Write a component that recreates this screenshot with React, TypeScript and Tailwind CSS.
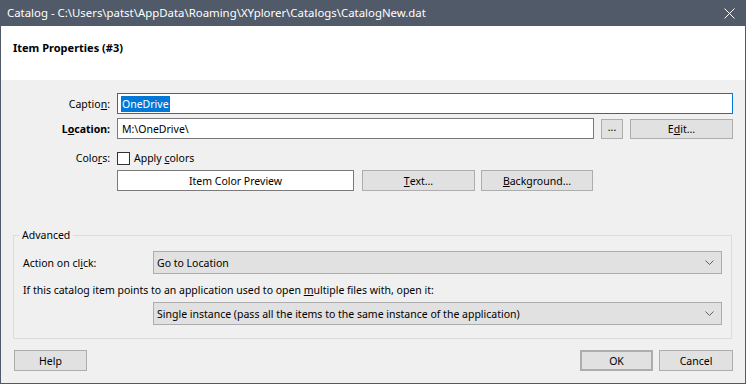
import React from 'react'

const font = "font-['Noto_Sans',sans-serif] text-[10.5px] leading-[16px]"

function Btn({ children, className = '' }: { children: React.ReactNode; className?: string }) {
  return (
    <div
      className={`flex items-center justify-center bg-[#e1e1e1] border border-[#adadad] text-black ${className}`}
    >
      {children}
    </div>
  )
}

function Select({ value }: { value: string }) {
  return (
    <div className="flex-1 h-[23px] flex items-center justify-between bg-[#e1e1e1] border border-[#adadad] pl-[3px] pr-[7px]">
      <span>{value}</span>
      <svg width="9" height="5" viewBox="0 0 9 5" className="text-[#606060]">
        <path d="M0.5 0.5 L4.5 4.5 L8.5 0.5" fill="none" stroke="currentColor" strokeWidth="1" />
      </svg>
    </div>
  )
}

export default function App() {
  const [apply, setApply] = React.useState(false)
  return (
    <div className={`w-[746px] h-[384px] bg-[#505a69] px-px pb-px flex flex-col ${font}`}>
      {/* title bar */}
      <div className="h-[26px] flex items-center justify-between text-white pl-[6px] pr-[10px]">
        <span className="text-[11.4px]">Catalog - C:\Users\patst\AppData\Roaming\XYplorer\Catalogs\CatalogNew.dat</span>
        <svg width="11" height="11" viewBox="0 0 11 11">
          <path d="M0.5 0.5 L10.5 10.5 M10.5 0.5 L0.5 10.5" stroke="white" strokeWidth="1" />
        </svg>
      </div>

      {/* header */}
      <div className="h-[54px] bg-white flex items-start pl-[12px] pt-[14px]">
        <span className="font-bold text-black text-[11px]">Item Properties (#3)</span>
      </div>

      {/* body */}
      <div className="flex-1 bg-[#f0f0f0] text-black flex flex-col px-[12px] pt-[13px]">
        <div className="flex items-center h-[21px]">
          <div className="w-[104px] text-right pr-[7px]">
            Captio<u>n</u>:
          </div>
          <div className="flex-1 h-[21px] bg-white border border-[#0078d7] flex items-center pl-[3px]">
            <span className="bg-[#0078d7] text-white pl-px pr-[1px]">OneDrive</span>
          </div>
        </div>

        <div className="flex items-center h-[21px] mt-[4px]">
          <div className="w-[104px] text-right pr-[7px] font-bold">
            L<u>o</u>cation:
          </div>
          <div className="w-[477px] h-[21px] bg-white border border-[#7a7a7a] flex items-center pl-[4px]">
            M:\OneDrive\
          </div>
          <Btn className="w-[22px] h-[20px] ml-[7px] pb-[4px]">...</Btn>
          <Btn className="flex-1 h-[20px] ml-[7px]">
            E<u>d</u>it...
          </Btn>
        </div>

        <div className="flex items-center mt-[12px] h-[14px]">
          <div className="w-[104px] text-right pr-[7px]">
            Colo<u>r</u>s:
          </div>
          <label className="flex items-center gap-[4px]" onClick={() => setApply(!apply)}>
            <span className="w-[13px] h-[13px] bg-white border border-[#333333]" />
            <span>
              Apply <u>c</u>olors
            </span>
          </label>
        </div>

        <div className="flex items-center mt-[5px] pl-[104px] h-[21px]">
          <div className="w-[237px] h-[21px] bg-white border border-[#7a7a7a] flex items-center justify-center">
            Item Color Preview
          </div>
          <Btn className="w-[113px] h-[21px] ml-[8px]">
            <u>T</u>ext...
          </Btn>
          <Btn className="w-[112px] h-[21px] ml-[6px]">
            <u>B</u>ackground...
          </Btn>
        </div>

        <fieldset className="mt-[36px] border border-[#dcdcdc] px-[9px] pb-[13px] w-[719px]">
          <legend className="-ml-[4px] px-[3px] text-black">Advanced</legend>
          <div className="flex items-center mt-[8px]">
            <div className="w-[130px]">
              Action on cl<u>i</u>ck:
            </div>
            <Select value="Go to Location" />
          </div>
          <div className="mt-[8px]">
            If this catalog item points to an application used to open <u>m</u>ultiple files with, open it:
          </div>
          <div className="flex mt-[4px] pl-[130px]">
            <Select value="Single instance (pass all the items to the same instance of the application)" />
          </div>
        </fieldset>

        <div className="flex items-center mt-[11px]">
          <Btn className="w-[73px] h-[21px] ml-px">Help</Btn>
          <div className="flex-1" />
          <Btn className="w-[73px] h-[21px] border-2 border-[#0078d7]">OK</Btn>
          <Btn className="w-[74px] h-[21px] ml-[6px]">Cancel</Btn>
        </div>
      </div>
    </div>
  )
}
